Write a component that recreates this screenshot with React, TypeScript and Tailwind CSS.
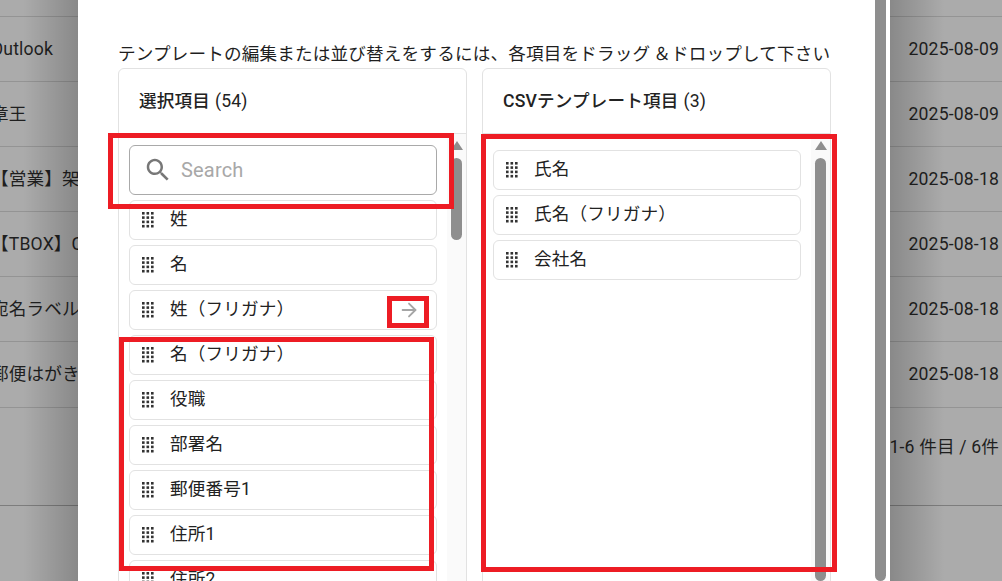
import type { ReactNode } from 'react'
import { ArrowRight } from 'lucide-react'

const font = "font-['Roboto','Noto_Sans_CJK_JP',sans-serif]"

const rows = [
  { name: 'Outlook', date: '2025-08-09' },
  { name: '章王', date: '2025-08-09' },
  { name: '【営業】架', date: '2025-08-18' },
  { name: '【TBOX】C', date: '2025-08-18' },
  { name: '宛名ラベル', date: '2025-08-18' },
  { name: '郵便はがき', date: '2025-08-18' },
]

const leftItems = ['姓', '名', '姓（フリガナ）', '名（フリガナ）', '役職', '部署名', '郵便番号1', '住所1', '住所2']
const rightItems = ['氏名', '氏名（フリガナ）', '会社名']

function DragDots() {
  const dots = []
  for (let y = 0; y < 4; y++) {
    for (let x = 0; x < 3; x++) {
      dots.push(<rect key={`${x}-${y}`} x={x * 4.5} y={y * 4.3} width="2.6" height="2.6" />)
    }
  }
  return (
    <svg width="12" height="16" viewBox="0 0 12 16" className="shrink-0 fill-[#333]">
      {dots}
    </svg>
  )
}

function Item({ label, arrow }: { label: string; arrow?: boolean }) {
  return (
    <div className="flex h-10 shrink-0 items-center rounded-md border border-[#e2e2e2] bg-white pr-4 pl-3">
      <DragDots />
      <span className="ml-4 -translate-y-px text-[17.6px] leading-6 tracking-[0.165px] text-[#222]">{label}</span>
      {arrow && <ArrowRight size={22} strokeWidth={2} className="ml-auto text-[#a5a5a5]" />}
    </div>
  )
}

function Scrollbar({ short }: { short?: boolean }) {
  return (
    <div className="flex w-[19px] shrink-0 flex-col items-center bg-[#fafafa] pt-[7px]">
      <div className="h-0 w-0 border-x-[6px] border-b-[9px] border-x-transparent border-b-[#8e8e8e]" />
      <div className={`mt-2 w-[11px] rounded-md bg-[#8e8e8e] ${short ? 'h-[82px]' : 'h-[423px]'}`} />
    </div>
  )
}

function Panel({ title, count, children, short }: { title: string; count: string; children: ReactNode; short?: boolean }) {
  return (
    <section className="flex h-[560px] w-[349px] flex-col rounded-t-md border border-[#e2e2e2]">
      <h2 className="flex h-[65px] shrink-0 items-center gap-[5px] border-b border-[#e2e2e2] pl-5 text-[17.6px] leading-6 font-medium tracking-[0.165px] text-[#222]">
        {title}
        <span className="font-normal">{count}</span>
      </h2>
      <div className="flex min-h-0 flex-1 overflow-hidden">
        <div className="flex min-w-0 flex-1 flex-col gap-[5px] px-[10px] pt-[11px]">{children}</div>
        <Scrollbar short={short} />
      </div>
    </section>
  )
}

export default function App() {
  return (
    <div className={`relative h-[581px] w-[1002px] overflow-hidden bg-[#ababab] ${font}`}>
      <div className="pt-4 text-[17.6px] leading-6 tracking-[0.165px] text-[#1f1f1f]">
        {rows.map((row) => (
          <div key={row.name} className="flex h-[65px] items-center justify-between border-t border-[#949494] pr-[3px]">
            <span className="-ml-[9px] whitespace-nowrap">{row.name}</span>
            <span>{row.date}</span>
          </div>
        ))}
        <div className="mt-px flex h-[98px] justify-end border-t border-[#949494] pt-[27px] pr-[3px]">
          <span>1-6 件目 / 6件</span>
        </div>
        <div className="border-t border-[#7d7d7d]" />
      </div>

      <div className="absolute inset-y-0 left-0 w-[78px] bg-gradient-to-r from-transparent from-30% to-black/20" />
      <div className="absolute inset-y-0 left-[890px] w-[78px] bg-gradient-to-l from-transparent from-30% to-black/20" />

      <div className="absolute inset-y-0 left-[78px] flex w-[812px] bg-white">
        <div className="w-[797px] shrink-0 pt-[42px] pl-10">
          <p className="text-[17.6px] leading-6 tracking-[0.165px] whitespace-nowrap text-[#1f1f1f]">
            テンプレートの編集または並び替えをするには、各項目をドラッグ<span className="ml-[3px]">＆</span>ドロップして下さい
          </p>
          <div className="mt-[2px] flex gap-[15px]">
            <Panel title="選択項目" count="(54)" short>
              <div className="flex h-[50px] shrink-0 items-center rounded-md border border-[#a9a9a9] bg-white pl-[13px]">
                <svg width="30" height="30" viewBox="0 0 24 24" className="fill-[#777]">
                  <path d="M15.5 14h-.79l-.28-.27C15.41 12.59 16 11.11 16 9.5 16 5.91 13.09 3 9.5 3S3 5.91 3 9.5 5.91 16 9.5 16c1.61 0 3.09-.59 4.23-1.57l.27.28v.79l5 4.99L20.49 19zm-6 0C7.01 14 5 11.99 5 9.5S7.01 5 9.5 5 14 7.01 14 9.5 11.99 14 9.5 14" />
                </svg>
                <span className="ml-2 text-[20px] tracking-[0.19px] text-[#a8a8a8]">Search</span>
              </div>
              {leftItems.map((label) => (
                <Item key={label} label={label} arrow={label === '姓（フリガナ）'} />
              ))}
            </Panel>
            <Panel title="CSVテンプレート項目" count="(3)">
              <div className="mt-[5px] flex flex-col gap-[5px]">
                {rightItems.map((label) => (
                  <Item key={label} label={label} />
                ))}
              </div>
            </Panel>
          </div>
        </div>
        <div className="w-[11px] shrink-0 rounded-b-md bg-[#8e8e8e]" />
      </div>

      {/* annotation boxes drawn over the screenshot */}
      <div className="absolute top-[133px] left-[108px] h-[76px] w-[346px] border-[5px] border-[#ed1c24]" />
      <div className="absolute top-[296px] left-[387px] h-[32px] w-[42px] border-[5px] border-[#ed1c24]" />
      <div className="absolute top-[337px] left-[119px] h-[234px] w-[315px] border-[5px] border-[#ed1c24]" />
      <div className="absolute top-[134px] left-[481px] h-[438px] w-[356px] border-[5px] border-[#ed1c24]" />
    </div>
  )
}
